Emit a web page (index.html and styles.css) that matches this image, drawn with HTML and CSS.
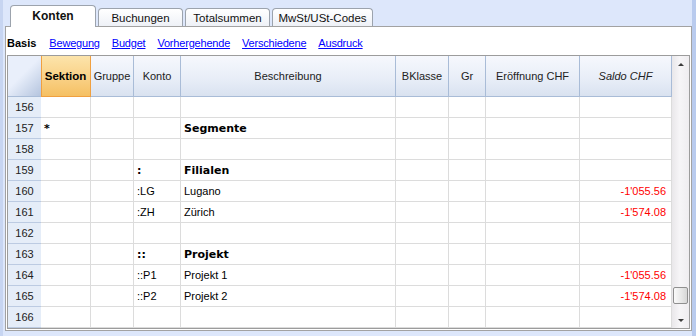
FILE: index.html
```html
<!DOCTYPE html>
<html lang="de">
<head>
    <meta charset="UTF-8">
    <title>Konten</title>
    <link rel="stylesheet" href="styles.css">
</head>
<body>
    <div class="tabs">
        <div class="tab active">Konten</div>
        <div class="tab">Buchungen</div>
        <div class="tab">Totalsummen</div>
        <div class="tab wide">MwSt/USt-Codes</div>
    </div>
    <div class="panel">
        <div class="views">
            <b>Basis</b>
            <a href="#">Bewegung</a>
            <a href="#">Budget</a>
            <a href="#">Vorhergehende</a>
            <a href="#">Verschiedene</a>
            <a href="#">Ausdruck</a>
        </div>
        <div class="grid">
            <div class="sheet">
                <div class="row head">
                    <div class="corner"></div>
                    <div class="sel">Sektion</div>
                    <div>Gruppe</div>
                    <div>Konto</div>
                    <div>Beschreibung</div>
                    <div>BKlasse</div>
                    <div>Gr</div>
                    <div>Eröffnung CHF</div>
                    <div class="it">Saldo CHF</div>
                </div>
                <div class="row"><div class="num">156</div><div></div><div></div><div></div><div></div><div></div><div></div><div></div><div></div></div>
                <div class="row bold"><div class="num">157</div><div>*</div><div></div><div></div><div>Segmente</div><div></div><div></div><div></div><div></div></div>
                <div class="row"><div class="num">158</div><div></div><div></div><div></div><div></div><div></div><div></div><div></div><div></div></div>
                <div class="row bold"><div class="num">159</div><div></div><div></div><div>:</div><div>Filialen</div><div></div><div></div><div></div><div></div></div>
                <div class="row"><div class="num">160</div><div></div><div></div><div>:LG</div><div>Lugano</div><div></div><div></div><div></div><div class="neg">-1'055.56</div></div>
                <div class="row"><div class="num">161</div><div></div><div></div><div>:ZH</div><div>Zürich</div><div></div><div></div><div></div><div class="neg">-1'574.08</div></div>
                <div class="row"><div class="num">162</div><div></div><div></div><div></div><div></div><div></div><div></div><div></div><div></div></div>
                <div class="row bold"><div class="num">163</div><div></div><div></div><div>::</div><div>Projekt</div><div></div><div></div><div></div><div></div></div>
                <div class="row"><div class="num">164</div><div></div><div></div><div>::P1</div><div>Projekt 1</div><div></div><div></div><div></div><div class="neg">-1'055.56</div></div>
                <div class="row"><div class="num">165</div><div></div><div></div><div>::P2</div><div>Projekt 2</div><div></div><div></div><div></div><div class="neg">-1'574.08</div></div>
                <div class="row"><div class="num">166</div><div></div><div></div><div></div><div></div><div></div><div></div><div></div><div></div></div>
            </div>
            <div class="scroll">
                <div class="arrow"><span class="up"></span></div>
                <div class="track"><span class="thumb"></span></div>
                <div class="arrow"><span class="down"></span></div>
            </div>
        </div>
    </div>
</body>
</html>
```

FILE: styles.css
```css
body {
    margin: 0;
    width: 696px;
    height: 336px;
    overflow: hidden;
    font-family: "Liberation Sans", Arial, sans-serif;
    font-size: 11px;
    color: #000;
    background: linear-gradient(to right, #c7d5f1 0, #c7d5f1 3px, #dde7fb 3px, #dde7fb 692px, #b9cbee 692px);
}
.tabs {
    display: flex;
    align-items: flex-end;
    gap: 2px;
    height: 26px;
    padding-left: 10px;
}
.tab {
    box-sizing: border-box;
    width: 85px;
    height: 18px;
    border: 1px solid #9ca3ad;
    border-bottom: none;
    border-radius: 4px 4px 0 0;
    background: linear-gradient(#ffffff, #eef1f7);
    text-align: center;
    line-height: 18px;
    font-size: 11.5px;
    color: #111;
}
.tab.wide {
    width: 101px;
}
.tab.active {
    width: 86px;
    height: 22px;
    margin-bottom: -1px;
    position: relative;
    background: #fff;
    font-weight: bold;
    font-size: 12px;
    line-height: 21px;
}
.panel {
    box-sizing: border-box;
    width: 687px;
    height: 305px;
    margin-left: 5px;
    border: 1px solid #a2a2a2;
    background: #fff;
}
.views {
    display: flex;
    gap: 12px;
    height: 28px;
    box-sizing: border-box;
    padding: 9px 0 0 1px;
    line-height: 14px;
}
.views b {
    margin-right: 1px;
}
.views a {
    color: #0000ff;
    letter-spacing: -0.2px;
}
.grid {
    display: flex;
    width: 683px;
    height: 274px;
    box-sizing: border-box;
    margin-left: 1px;
    border: 1px solid #9c9c9c;
}
.sheet {
    width: 664px;
}
.row {
    display: grid;
    grid-template-columns: 33px 50px 43px 47px 215px 53px 37px 94px 92px;
    height: 21px;
}
.row > div {
    box-sizing: border-box;
    display: flex;
    align-items: center;
    padding: 0 3px;
    white-space: nowrap;
    overflow: hidden;
    border-right: 1px solid #dcdcdc;
    border-bottom: 1px solid #dcdcdc;
}
.row.bold > div {
    font-family: "DejaVu Sans", Verdana, sans-serif;
    font-size: 11px;
    font-weight: bold;
}
.row.head {
    height: 41px;
}
.row.head > div {
    justify-content: center;
    padding: 0;
    color: #222;
    background: linear-gradient(#f6f8fd, #e7edf7 60%, #d9e2f0);
    border-color: #a9bcd7;
}
.row.head .corner {
    background: linear-gradient(135deg, #e9effb 45%, #b4c4de);
    border-right: none;
}
.row.head .sel {
    font-weight: bold;
    font-size: 11.5px;
    color: #000;
    background: linear-gradient(#fce4ab, #f9d186 55%, #f5c063);
    border-color: #f0a040;
    box-shadow: inset 1px 0 #f0a040;
}
.row.head .it {
    font-style: italic;
}
.row > .num,
.row.bold > .num {
    justify-content: center;
    padding: 0;
    font-family: "Liberation Sans", Arial, sans-serif;
    font-size: 11px;
    font-weight: normal;
    color: #222;
    background: #e5edf8;
    border-right: none;
    border-bottom-color: #bccbe2;
}
.row .neg {
    justify-content: flex-end;
    padding-right: 5px;
    color: #ff0000;
}
.scroll {
    display: flex;
    flex-direction: column;
    width: 17px;
    background: linear-gradient(to right, #e9e7ea, #f6f5f7 45%, #efedf0);
}
.arrow {
    height: 16px;
    display: flex;
    align-items: center;
    justify-content: center;
}
.arrow span {
    width: 0;
    height: 0;
    border-left: 3px solid transparent;
    border-right: 3px solid transparent;
}
.arrow .up {
    border-bottom: 3px solid #3c3c3c;
}
.arrow .down {
    border-top: 3px solid #3c3c3c;
}
.track {
    flex: 1;
    display: flex;
    align-items: flex-end;
    justify-content: center;
    padding-bottom: 8px;
}
.thumb {
    box-sizing: border-box;
    width: 15px;
    height: 17px;
    border: 1px solid #8f8f8f;
    border-radius: 2px;
    background: linear-gradient(to right, #fafafa, #e6e6e6 60%, #d6d6d6);
}
```
